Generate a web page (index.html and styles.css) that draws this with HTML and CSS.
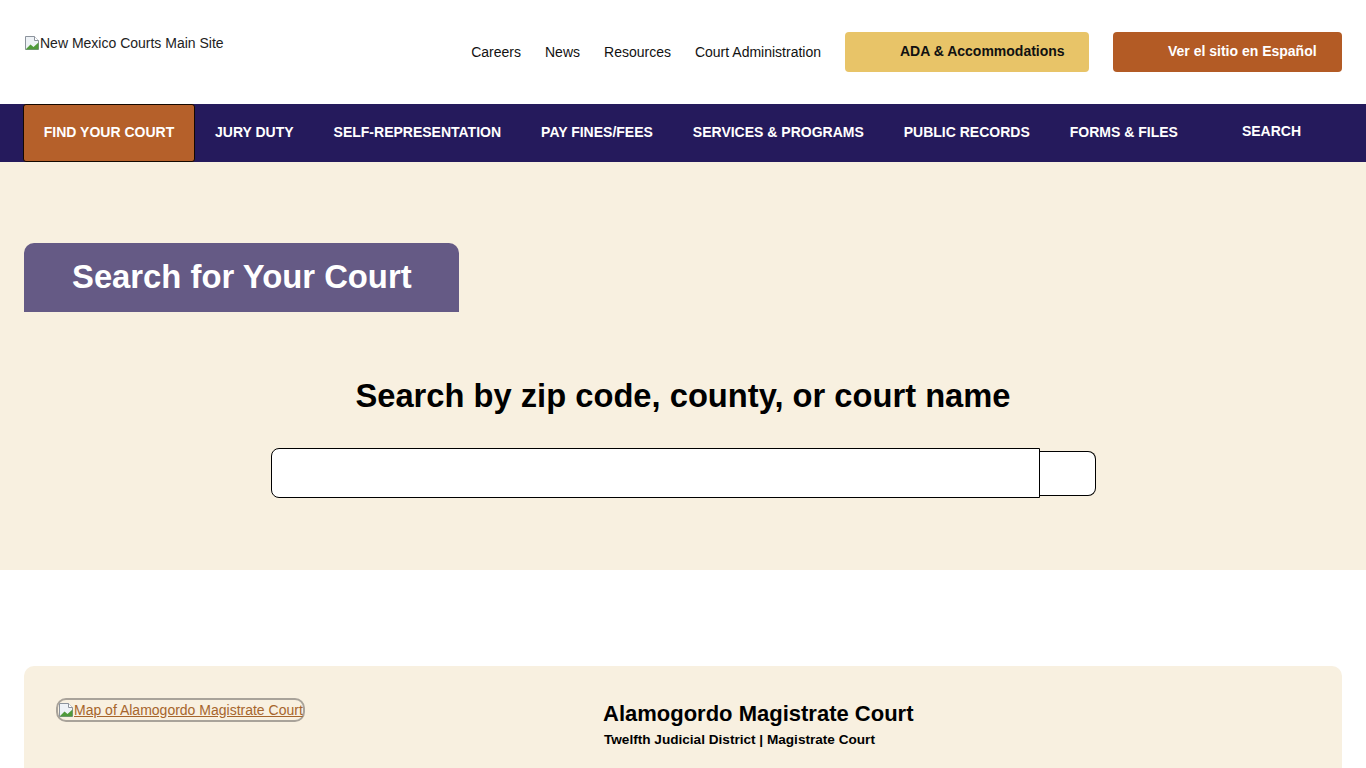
FILE: index.html
```html
<!DOCTYPE html>
<html lang="en">
<head>
<meta charset="utf-8">
<title>Find Your Court - New Mexico Courts</title>
<link rel="stylesheet" href="styles.css">
</head>
<body>
<header class="site-header">
  <a class="logo" href="#">
    <svg class="broken" width="16" height="16" viewBox="0 0 16 16" aria-hidden="true"><path d="M1.5 1.5h9l4 4v9h-13z" fill="#eef2f6" stroke="#8c939c"/><path d="M1.5 14.5l5-5 3 2.5 5-4.5v7z" fill="#4f9a3a"/><path d="M10.5 1.5v4h4" fill="#fff" stroke="#8c939c"/></svg>New Mexico Courts Main Site
  </a>
  <div class="header-right">
    <nav class="util-nav">
      <a href="#">Careers</a>
      <a href="#">News</a>
      <a href="#">Resources</a>
      <a href="#">Court Administration</a>
    </nav>
    <a class="btn btn-ada" href="#">ADA &amp; Accommodations</a>
    <a class="btn btn-es" href="#">Ver el sitio en Español</a>
  </div>
</header>

<nav class="main-nav">
  <a class="nav-item active" href="#">FIND YOUR COURT</a>
  <a class="nav-item" href="#">JURY DUTY</a>
  <a class="nav-item" href="#">SELF-REPRESENTATION</a>
  <a class="nav-item" href="#">PAY FINES/FEES</a>
  <a class="nav-item" href="#">SERVICES &amp; PROGRAMS</a>
  <a class="nav-item" href="#">PUBLIC RECORDS</a>
  <a class="nav-item" href="#">FORMS &amp; FILES</a>
  <a class="nav-item nav-search" href="#">SEARCH</a>
</nav>

<section class="hero">
  <div class="tab"><h1>Search for Your Court</h1></div>
  <h2 class="search-title">Search by zip code, county, or court name</h2>
  <form class="search-form">
    <input class="search-input" type="text" aria-label="Search">
    <button class="search-btn" type="button" aria-label="Submit"></button>
  </form>
</section>

<section class="results">
  <article class="court-card">
    <div class="map-col">
      <a class="map-link" href="#"><svg class="broken" width="16" height="16" viewBox="0 0 16 16" aria-hidden="true"><path d="M1.5 1.5h9l4 4v9h-13z" fill="#eef2f6" stroke="#8c939c"/><path d="M1.5 14.5l5-5 3 2.5 5-4.5v7z" fill="#4f9a3a"/><path d="M10.5 1.5v4h4" fill="#fff" stroke="#8c939c"/></svg>Map of Alamogordo Magistrate Court</a>
    </div>
    <div class="info-col">
      <h3 class="court-name">Alamogordo Magistrate Court</h3>
      <p class="court-meta">Twelfth Judicial District | Magistrate Court</p>
    </div>
  </article>
</section>
</body>
</html>
```

FILE: styles.css
```css
* { box-sizing: border-box; }
html, body { margin: 0; padding: 0; }
body {
  font-family: "Liberation Sans", Arial, sans-serif;
  color: #000;
  background: #fff;
}
a { color: inherit; text-decoration: none; }

.site-header {
  height: 104px;
  display: flex;
  justify-content: space-between;
  align-items: flex-start;
  padding: 0 24px;
}
.logo {
  margin-top: 35px;
  font-size: 14px;
  display: flex;
  align-items: center;
  color: #222;
}
.broken { display: block; flex: none; }

.header-right {
  display: flex;
  align-items: center;
  margin-top: 32px;
}
.util-nav {
  display: flex;
  gap: 24px;
  font-size: 14px;
  margin-right: 24px;
  margin-top: -1px;
}
.util-nav a { color: #111; }

.btn {
  height: 40px;
  border-radius: 4px;
  display: flex;
  align-items: center;
  font-weight: bold;
  font-size: 14px;
  padding: 0 24px 2px 55px;
}
.btn-ada { background: #e8c468; color: #111; width: 244px; }
.btn-es { background: #b35b25; color: #fff; width: 229px; margin-left: 24px; }

.main-nav {
  height: 58px;
  background: #251a5c;
  display: flex;
  align-items: stretch;
  padding-left: 23px;
}
.nav-item {
  display: flex;
  align-items: center;
  padding: 0 20px 2px;
  color: #fff;
  font-weight: bold;
  font-size: 14px;
  white-space: nowrap;
}
.nav-item.active {
  background: #b5602a;
  border: 1px solid #140800;
  border-radius: 3px;
  padding: 0 20px 2px;
  width: 172px;
  justify-content: center;
}
.nav-search { padding-left: 44px; padding-bottom: 4px; }

.hero {
  background: #f8f0e0;
  height: 408px;
  padding: 81px 24px 0;
}
.tab {
  display: inline-block;
  background: #655a85;
  border-radius: 10px 10px 0 0;
  width: 435px;
  height: 69px;
  padding: 0 48px;
}
.tab h1 {
  margin: 0;
  color: #fff;
  font-size: 32.8px;
  font-weight: bold;
  line-height: 67px;
  white-space: nowrap;
}
.search-title {
  text-align: center;
  font-size: 32.7px;
  font-weight: bold;
  margin: 64px 0 0;
  line-height: 40px;
}
.search-form {
  display: flex;
  align-items: center;
  justify-content: center;
  margin-top: 32px;
  padding-left: 1px;
}
.search-input {
  width: 769px;
  height: 50px;
  border: 1px solid #000;
  border-radius: 8px 0 0 8px;
  background: #fff;
}
.search-btn {
  width: 56px;
  height: 45px;
  border: 1px solid #000;
  border-left-width: 0;
  border-radius: 0 8px 8px 0;
  background: #fff;
}

.results { padding: 96px 24px 0; }
.court-card {
  background: #f8f0e0;
  border-radius: 10px;
  height: 200px;
  display: flex;
  padding: 32px 32px;
}
.map-col { width: 547px; }
.map-link {
  display: inline-flex;
  align-items: center;
  border: 2px solid #a9a39a;
  border-radius: 10px;
  color: #a6652c;
  text-decoration: underline;
  font-size: 14px;
  padding: 2px 0;
}
.info-col { padding-top: 2px; }
.court-name {
  margin: 0;
  font-size: 22px;
  font-weight: bold;
  line-height: 28px;
}
.court-meta {
  margin: 4px 0 0 1px;
  font-size: 13.6px;
  font-weight: bold;
}
```
